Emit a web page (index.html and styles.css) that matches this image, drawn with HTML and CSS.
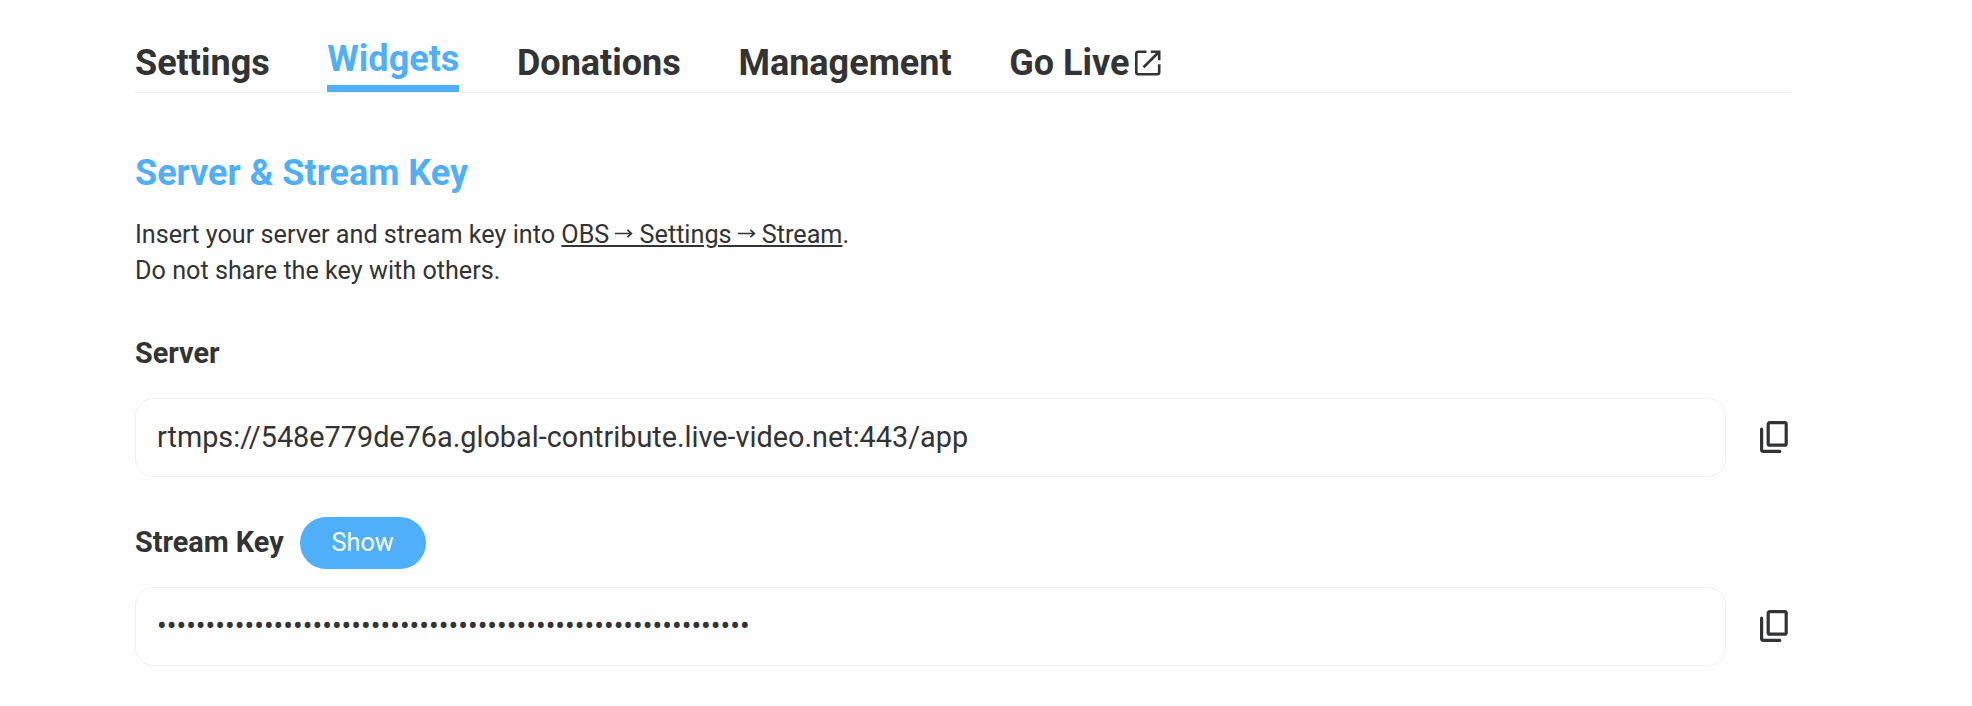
FILE: index.html
```html
<!DOCTYPE html>
<html lang="en">
<head>
<meta charset="utf-8">
<title>Server &amp; Stream Key</title>
<link rel="stylesheet" href="styles.css">
</head>
<body>
<main class="page">
  <nav class="tabs">
    <a class="tab">Settings</a>
    <a class="tab tab-active">Widgets</a>
    <a class="tab">Donations</a>
    <a class="tab">Management</a>
    <a class="tab">Go Live<svg class="external" viewBox="0 0 26 26"><path d="M11.5 1.8H3.3Q1.3 1.8 1.3 3.8V22.2Q1.3 24.2 3.3 24.2H22.2Q24.2 24.2 24.2 22.2V14.3M15.8 1.8H24.2V10.2M24.2 1.8L8.5 17.3"/></svg></a>
  </nav>
  <h1 class="title">Server &amp; Stream Key</h1>
  <p class="intro">Insert your server and stream key into <span class="path">OBS<svg class="arrow" viewBox="0 0 24 18"><path d="M6 4.5H22M18.4 .8L22.4 4.5L18.4 8.2"/><path class="arrow-underline" d="M-1 17H25"/></svg> Settings<svg class="arrow" viewBox="0 0 24 18"><path d="M6 4.5H22M18.4 .8L22.4 4.5L18.4 8.2"/><path class="arrow-underline" d="M-1 17H25"/></svg> Stream</span>.<br>Do not share the key with others.</p>
  <div class="label-row"><h2 class="label">Server</h2></div>
  <div class="field-row">
    <div class="field">rtmps://548e779de76a.global-contribute.live-video.net:443/app</div>
    <svg class="copy" viewBox="0 0 28 32"><rect x="8.2" y="1.6" width="18" height="22.6" rx="1.5"/><path d="M1.6 8.2V28.6Q1.6 30.4 3.4 30.4H19.8"/></svg>
  </div>
  <div class="label-row"><h2 class="label">Stream Key</h2><button class="show">Show</button></div>
  <div class="field-row">
    <div class="field">•••••••••••••••••••••••••••••••••••••••••••••••••••••••••••••</div>
    <svg class="copy" viewBox="0 0 28 32"><rect x="8.2" y="1.6" width="18" height="22.6" rx="1.5"/><path d="M1.6 8.2V28.6Q1.6 30.4 3.4 30.4H19.8"/></svg>
  </div>
</main>
</body>
</html>
```
FILE: styles.css
```css
* { box-sizing: border-box; }
body {
  margin: 0;
  background: #fefefe;
  color: #323335;
  font-family: Roboto, sans-serif;
}
.page { width: 1657px; margin-left: 135px; padding-top: 36px; }
.tabs {
  display: flex;
  align-items: flex-end;
  gap: 57.6px;
  width: 1656px;
  height: 57px;
  border-bottom: 1px solid #f1f1f1;
}
.tab {
  display: flex;
  align-items: center;
  height: 58px;
  font-size: 36px;
  font-weight: 700;
  line-height: 42px;
}
.tab-active {
  height: 56px;
  padding-bottom: 3px;
  color: #50affa;
  border-bottom: 7px solid #50affa;
}
.external { width: 26px; height: 26px; margin-left: 6px; }
.external, .copy, .arrow { fill: none; stroke: #323335; flex: none; }
.external { stroke-width: 2.6; }
.title {
  margin: 59px 0 0;
  color: #50affa;
  font-size: 36px;
  font-weight: 700;
  line-height: 42px;
}
.intro { margin: 23px 0 0; font-size: 25.2px; line-height: 36px; }
.path {
  text-decoration: underline;
  text-decoration-thickness: 2px;
  text-underline-offset: 2px;
}
.arrow {
  width: 24px;
  height: 18px;
  vertical-align: -4px;
  overflow: visible;
  stroke-width: 1.7;
}
.arrow-underline { stroke-width: 2; }
.label-row { display: flex; align-items: center; gap: 16px; height: 52px; margin-top: 39px; }
.field-row + .label-row { margin-top: 40px; }
.label { margin: 0; padding-bottom: 2px; font-size: 28.8px; font-weight: 700; line-height: 34px; }
.field-row { display: flex; align-items: center; gap: 33.5px; margin-top: 18px; }
.field {
  width: 1591px;
  height: 79px;
  padding: 0 21px;
  border: 1px solid #f1f1f1;
  border-radius: 18px;
  font-size: 28.8px;
  line-height: 77px;
}
.copy { width: 28px; height: 32px; margin-bottom: 2px; stroke-width: 3.2; stroke-linecap: round; }
.show {
  width: 126px;
  height: 52px;
  padding: 0;
  border: 0;
  border-radius: 26px;
  background: #50affa;
  color: #fff;
  font: 400 25.2px/50px Roboto, sans-serif;
}
```
